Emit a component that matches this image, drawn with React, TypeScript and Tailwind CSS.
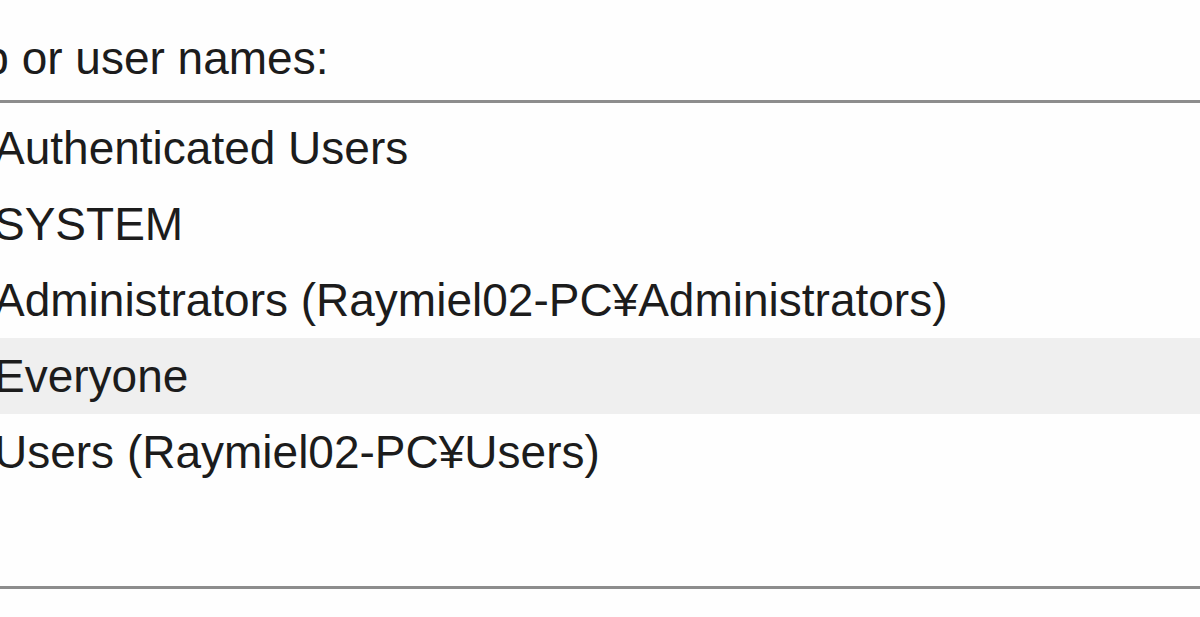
const principals = [
  { name: "Authenticated Users" },
  { name: "SYSTEM" },
  { name: "Administrators (Raymiel02-PC¥Administrators)" },
  { name: "Everyone", selected: true },
  { name: "Users (Raymiel02-PC¥Users)" },
];

export default function App() {
  return (
    <div className="w-[1200px] h-[617px] overflow-hidden bg-[#fefefe] text-[#1c1c1c] font-['Liberation_Sans',Arial,sans-serif] text-[46px]">
      <div className="h-[100px] pt-[35px] leading-[46px] ml-[-119px] whitespace-nowrap">
        Group or user names:
      </div>
      <div className="h-[489px] border-t-[3px] border-b-[3px] border-[#8d8d8d] pt-[7px]">
        {principals.map((p) => (
          <div
            key={p.name}
            className={`h-[76px] leading-[76px] whitespace-nowrap pl-[-6px] ${
              p.selected ? "bg-[#efefef]" : ""
            }`}
          >
            <span className="ml-[-6px]">{p.name}</span>
          </div>
        ))}
      </div>
    </div>
  );
}
